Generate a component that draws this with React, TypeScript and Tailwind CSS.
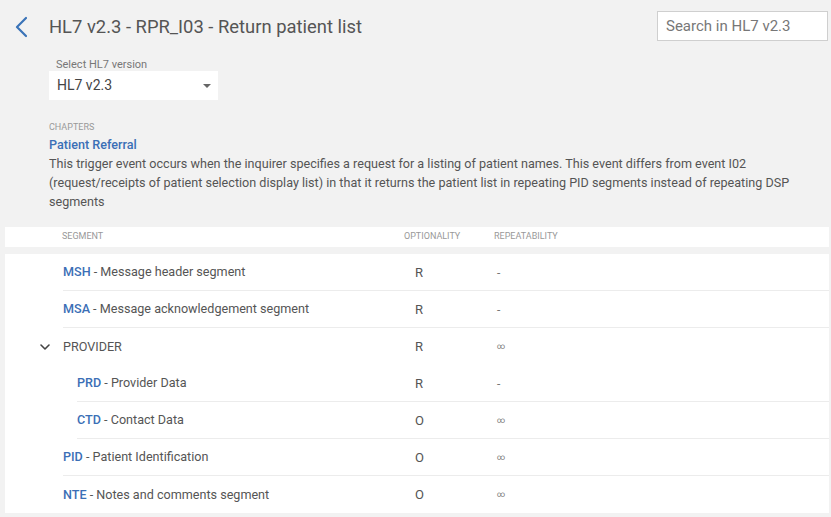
import { ChevronDown } from "lucide-react";

type Row = {
  code?: string;
  name: string;
  opt: string;
  rep: string;
  indent?: boolean;
  group?: boolean;
  line?: boolean;
};

const rows: Row[] = [
  { code: "MSH", name: "Message header segment", opt: "R", rep: "-", line: true },
  { code: "MSA", name: "Message acknowledgement segment", opt: "R", rep: "-", line: true },
  { name: "PROVIDER", opt: "R", rep: "∞", group: true },
  { code: "PRD", name: "Provider Data", opt: "R", rep: "-", indent: true, line: true },
  { code: "CTD", name: "Contact Data", opt: "O", rep: "∞", indent: true, line: true },
  { code: "PID", name: "Patient Identification", opt: "O", rep: "∞", line: true },
  { code: "NTE", name: "Notes and comments segment", opt: "O", rep: "∞" },
];

export default function App() {
  return (
    <div
      className="min-h-[517px] w-[831px] bg-[#f2f2f2] text-[#555]"
      style={{ fontFamily: "Roboto, 'Liberation Sans', sans-serif" }}
    >
      <div className="flex items-start justify-between pl-[15px] pr-[3px] pt-[11px]">
        <div className="flex items-center pt-[4px]">
          <svg width="12" height="22" viewBox="0 0 12 22" className="text-[#3b74b8]">
            <polyline points="11,2 2,11 11,20" fill="none" stroke="currentColor" strokeWidth="2.2" strokeLinecap="round" strokeLinejoin="round" />
          </svg>
          <h1 className="ml-[22px] text-[18.4px] font-normal leading-[24px] text-[#555]">
            HL7 v2.3 - RPR_I03 - Return patient list
          </h1>
        </div>
        <div className="flex h-[30px] w-[171px] items-center border border-[#cfcfcf] bg-white px-[8px] text-[15px] text-[#777]">
          Search in HL7 v2.3
        </div>
      </div>

      <div className="pl-[49px] pt-[18px]">
        <div className="pl-[7px] text-[11px] leading-[12px] text-[#777]">Select HL7 version</div>
        <div className="flex h-[29px] w-[169px] items-center justify-between bg-white pl-[8px] pr-[4px] text-[14px] text-[#444]">
          <span>HL7 v2.3</span>
          <span className="mr-[3px] h-0 w-0 border-x-[4px] border-t-[4px] border-x-transparent border-t-[#666]" />
        </div>
      </div>

      <div className="pl-[49px] pr-[20px] pt-[22px]">
        <div className="text-[9px] leading-[10px] text-[#999]">CHAPTERS</div>
        <div className="mt-[4px] text-[12.6px] font-medium leading-[18px] text-[#3b6fb6]">Patient Referral</div>
        <p className="text-[12.6px] leading-[19px] text-[#555]">
          This trigger event occurs when the inquirer specifies a request for a listing of patient names. This event differs from event I02 (request/receipts of patient selection display list) in that it returns the patient list in repeating PID segments instead of repeating DSP segments
        </p>
      </div>

      <div className="ml-[5px] mr-[2px] mt-[16px] flex h-[20px] items-center bg-white text-[9px] uppercase text-[#999]">
        <div className="flex-1 pl-[57px]">Segment</div>
        <div className="w-[90px]">Optionality</div>
        <div className="w-[335px]">Repeatability</div>
      </div>

      <div className="ml-[5px] mr-[2px] mt-[7px] bg-white">
        {rows.map((r, i) => (
          <div key={i} className="flex h-[37px] text-[12.6px]">
            <div className={`flex shrink-0 items-center justify-end ${r.indent ? "w-[72px]" : "w-[58px]"}`}>
              {r.group && <ChevronDown className="mr-[10px] h-[16px] w-[16px] text-[#444]" strokeWidth={2.4} />}
            </div>
            <div className={`flex flex-1 items-center pt-[1px] ${r.line ? "border-b border-[#ececec]" : ""}`}>
              <div className="flex-1">
                {r.code ? (
                  <>
                    <span className="font-medium text-[#3b6fb6]">{r.code}</span>
                    <span> - {r.name}</span>
                  </>
                ) : (
                  <span>{r.name}</span>
                )}
              </div>
              <div className="w-[90px] pl-[11px] text-[13px]">{r.opt}</div>
              <div className={`w-[335px] pl-[3px] text-[#777] ${r.rep === "∞" ? "text-[8px]" : "text-[12px]"}`}>{r.rep}</div>
            </div>
          </div>
        ))}
      </div>
    </div>
  );
}
